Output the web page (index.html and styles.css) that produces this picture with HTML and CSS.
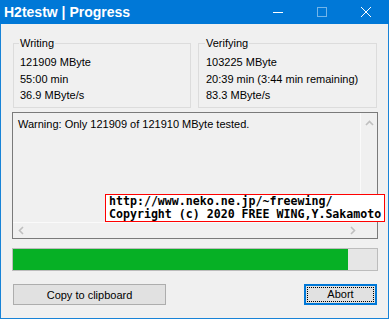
FILE: index.html
```html
<!DOCTYPE html>
<html lang="en">

<head>
  <meta charset="UTF-8" />
  <title>H2testw | Progress</title>
  <link rel="stylesheet" href="styles.css">
</head>

<body>

  <div class="window">
    <div class="titlebar">
      <span class="title">H2testw | Progress</span>
      <div class="controls">
        <span class="ctrl">
          <svg width="10" height="10" viewBox="0 0 10 10"><path d="M0 5.5h10" stroke="#fff" /></svg>
        </span>
        <span class="ctrl">
          <svg width="10" height="10" viewBox="0 0 10 10"><rect x="0.5" y="0.5" width="9" height="9" fill="none" stroke="#fff" opacity="0.45" /></svg>
        </span>
        <span class="ctrl">
          <svg width="10" height="10" viewBox="0 0 10 10"><path d="M0 0L10 10M10 0L0 10" stroke="#fff" /></svg>
        </span>
      </div>
    </div>

    <div class="client">
      <div class="groups">
        <fieldset class="group">
          <legend>Writing</legend>
          <div>121909 MByte</div>
          <div>55:00 min</div>
          <div>36.9 MByte/s</div>
        </fieldset>
        <fieldset class="group verify">
          <legend>Verifying</legend>
          <div>103225 MByte</div>
          <div>20:39 min (3:44 min remaining)</div>
          <div>83.3 MByte/s</div>
        </fieldset>
      </div>

      <div class="log">
        <div class="log-text">Warning: Only 121909 of 121910 MByte tested.</div>
        <div class="vscroll">
          <svg width="9" height="6" viewBox="0 0 9 6"><path d="M1 5L4.5 1.5L8 5" fill="none" stroke="#bfbfbf" stroke-width="1.6" /></svg>
        </div>
        <div class="hscroll">
          <svg width="6" height="9" viewBox="0 0 6 9"><path d="M5 1L1.5 4.5L5 8" fill="none" stroke="#bfbfbf" stroke-width="1.6" /></svg>
          <svg width="6" height="9" viewBox="0 0 6 9"><path d="M1 1L4.5 4.5L1 8" fill="none" stroke="#bfbfbf" stroke-width="1.6" /></svg>
        </div>
        <div class="corner"></div>
      </div>

      <div class="progress">
        <div class="fill" style="width: 335px"></div>
      </div>

      <div class="buttons">
        <button class="btn copy">Copy to clipboard</button>
        <button class="btn abort"><span class="focus">Abort</span></button>
      </div>
    </div>

    <div class="credit">
      http://www.neko.ne.jp/~freewing/<br>
      Copyright (c) 2020 FREE WING,Y.Sakamoto
    </div>
  </div>

</body>

</html>
```

FILE: styles.css
```css
body {
  margin: 0;
  background-color: #f0f0f0;
  font-family: "Liberation Sans", Arial, sans-serif;
  font-size: 11px;
  color: #000;
}

.window {
  position: relative;
  width: 389px;
  height: 319px;
  box-sizing: border-box;
  border: 1px solid #1883d7;
  border-top: none;
  background-color: #f0f0f0;
}

.titlebar {
  display: flex;
  align-items: center;
  height: 24px;
  margin: 0 -1px;
  background-color: #0078d7;
  color: #fff;
}

.title {
  padding-left: 4px;
  font-size: 14px;
  font-weight: bold;
  flex: 1;
}

.controls {
  display: flex;
  height: 100%;
  margin-right: 1px;
}

.ctrl {
  display: flex;
  align-items: center;
  justify-content: center;
  width: 44px;
}

.client {
  padding: 0 10px 0 11px;
}

.groups {
  display: grid;
  grid-template-columns: 178px 179px;
  gap: 7px;
  margin: 12px 1px 0;
}

.group {
  margin: 0;
  height: 72px;
  box-sizing: border-box;
  border: 1px solid #dcdcdc;
  padding: 4px 6px 0;
  line-height: 16.5px;
}

.group.verify {
  padding-left: 7px;
}

.group legend {
  padding: 0 1px;
  margin-left: -1px;
  line-height: 14px;
}

.log {
  display: grid;
  grid-template-columns: 1fr 17px;
  grid-template-rows: 1fr 16px;
  margin-top: 4px;
  height: 127px;
  box-sizing: border-box;
  border: 1px solid #7a7a7a;
}

.log-text {
  padding: 5px 0 0 5px;
}

.vscroll {
  display: flex;
  justify-content: center;
  padding-top: 7px;
  border-left: 1px solid #fafafa;
}

.hscroll {
  display: flex;
  align-items: center;
  justify-content: space-between;
  padding: 0 4px 0 5px;
  border-top: 1px solid #fafafa;
}

.progress {
  margin-top: 9px;
  height: 23px;
  box-sizing: border-box;
  border: 1px solid #bcbcbc;
  background-color: #e6e6e6;
}

.fill {
  height: 100%;
  background-color: #06b025;
}

.buttons {
  display: flex;
  justify-content: space-between;
  margin: 13px 1px 0;
}

.btn {
  height: 21px;
  box-sizing: border-box;
  border: 1px solid #adadad;
  background-color: #e1e1e1;
  font-family: "Liberation Sans", Arial, sans-serif;
  font-size: 11px;
  color: #000;
  padding: 0;
}

.copy {
  width: 153px;
}

.abort {
  width: 73px;
  border: 2px solid #0078d7;
  padding: 1px;
}

.focus {
  display: block;
  height: 100%;
  box-sizing: border-box;
  border: 1px dotted #000;
  line-height: 13px;
}

.credit {
  position: absolute;
  left: 104px;
  top: 194px;
  width: 280px;
  height: 28px;
  box-sizing: border-box;
  border: 1px solid #ff0000;
  background-color: #fff;
  padding: 0 0 0 3px;
  font-family: "DejaVu Sans Mono", monospace;
  font-weight: bold;
  font-size: 11.6px;
  line-height: 13px;
  white-space: nowrap;
}
```
